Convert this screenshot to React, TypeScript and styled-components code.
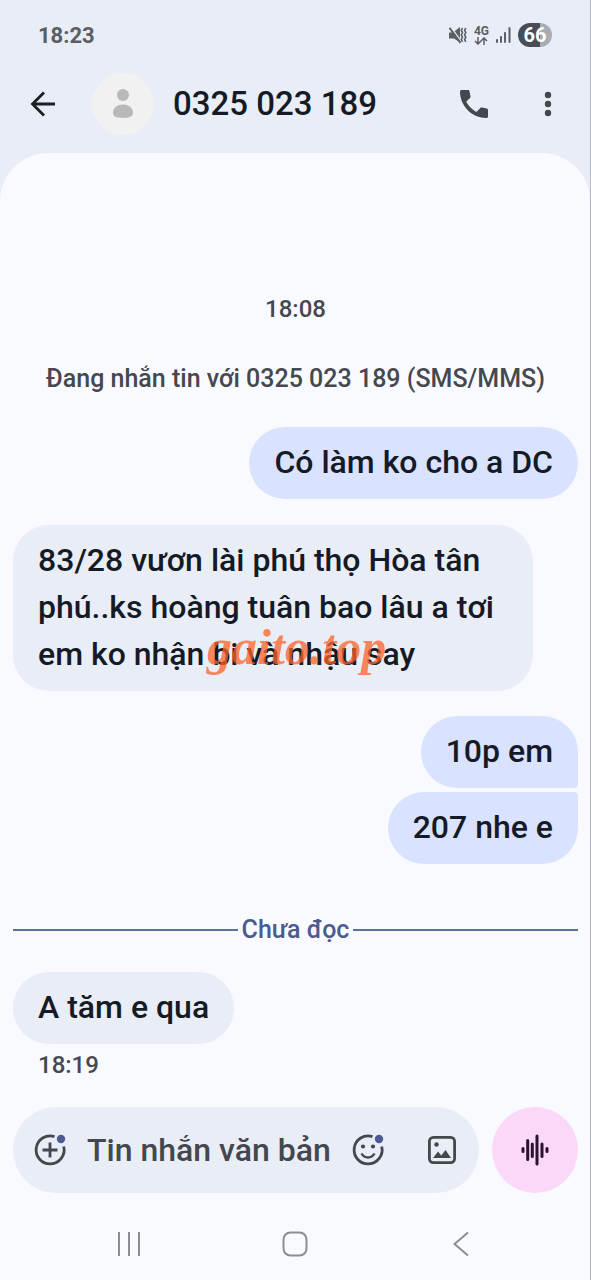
import React from "react";
import styled, { createGlobalStyle } from "styled-components";

const GlobalStyle = createGlobalStyle`
  *, *::before, *::after { box-sizing: border-box; }
  body {
    margin: 0;
    background: #e9edf6;
    font-family: Roboto, "Noto Sans", sans-serif;
    font-weight: 500;
    color: #151b26;
  }
  button, input { font: inherit; }
`;

const Screen = styled.div`
  display: flex;
  flex-direction: column;
  min-height: 100vh;
  border-right: 1px solid #b4b7c0;
  background: #e9edf6;
`;

const StatusBar = styled.div`
  display: flex;
  align-items: center;
  justify-content: space-between;
  height: 70px;
  padding: 0 38px;
  color: #5b5e65;
  font-size: 22px;
  font-weight: 700;
`;

const StatusIcons = styled.div`
  display: flex;
  align-items: center;
  gap: 7px;
`;

const Network = styled.span`
  display: flex;
  flex-direction: column;
  align-items: center;
  font-size: 12px;
  line-height: 11px;
`;

const Battery = styled.span`
  width: 34px;
  border-radius: 12px;
  background: linear-gradient(90deg, #4a4d53 66%, #a9acb2 66%);
  color: #ffffff;
  font-size: 20px;
  line-height: 24px;
  text-align: center;
`;

const Header = styled.header`
  display: flex;
  align-items: center;
  height: 83px;
  padding: 0 23px 16px 24px;
`;

const IconButton = styled.button`
  display: flex;
  flex: none;
  align-items: center;
  justify-content: center;
  width: 38px;
  height: 44px;
  padding: 0;
  border: 0;
  background: none;
  color: #44474e;
`;

const Avatar = styled.span`
  display: flex;
  align-items: center;
  justify-content: center;
  width: 62px;
  height: 62px;
  margin-left: 30px;
  border-radius: 50%;
  background: #f1f1f1;
`;

const Title = styled.h1`
  flex: 1;
  margin: 0 0 0 19px;
  font-size: 33px;
  font-weight: 500;
  line-height: 44px;
  white-space: nowrap;
`;

const HeaderActions = styled.div`
  display: flex;
  gap: 36px;
`;

const Sheet = styled.main`
  display: flex;
  flex: 1;
  flex-direction: column;
  border-radius: 48px 48px 0 0;
  background: #f8faff;
`;

const Conversation = styled.section`
  display: flex;
  flex: 1;
  flex-direction: column;
  justify-content: flex-end;
  padding: 120px 12px 27px 13px;
`;

const Time = styled.time`
  color: #45484f;
  font-size: 24px;
  line-height: 30px;
  text-align: center;
`;

const SentTime = styled(Time)`
  margin: 6px 25px 0;
  text-align: left;
`;

const Notice = styled.p`
  margin: 40px 0 33px;
  color: #45484f;
  font-size: 25px;
  line-height: 30px;
  text-align: center;
`;

const Bubble = styled.div<{ $sent?: boolean; $join?: "above" | "below" }>`
  position: relative;
  align-self: ${(p) => (p.$sent ? "flex-end" : "flex-start")};
  max-width: 520px;
  padding: 12px 25px 13px;
  border-radius: 36px;
  border-bottom-right-radius: ${(p) => (p.$join === "below" ? 4 : 36)}px;
  border-top-right-radius: ${(p) => (p.$join === "above" ? 4 : 36)}px;
  background: ${(p) => (p.$sent ? "#d9e2ff" : "#e9edf6")};
  font-size: 32px;
  line-height: 47px;
`;

const Group = styled.div<{ $top: number }>`
  display: flex;
  flex-direction: column;
  gap: 4px;
  margin-top: ${(p) => p.$top}px;
`;

const Watermark = styled.span`
  position: absolute;
  left: 194px;
  bottom: 16px;
  color: rgba(255, 98, 40, 0.75);
  font-family: "Liberation Serif", serif;
  font-size: 50px;
  font-style: italic;
  font-weight: 700;
  line-height: 56px;
`;

const Unread = styled.div`
  display: flex;
  align-items: center;
  gap: 4px;
  margin-top: 50px;
  color: #4c5b8c;
  font-size: 25px;
  line-height: 32px;

  &::before, &::after {
    content: "";
    flex: 1;
    height: 2px;
    background: #5b7491;
  }
`;

const Composer = styled.form`
  display: flex;
  gap: 13px;
  padding: 0 12px 0 13px;
`;

const Field = styled.div`
  display: flex;
  flex: 1;
  align-items: center;
  min-width: 0;
  height: 86px;
  padding: 0 18px;
  border-radius: 43px;
  background: #e9edf6;
`;

const TextInput = styled.input`
  flex: 1;
  min-width: 0;
  margin: 0 0 0 18px;
  padding: 0;
  border: 0;
  outline: 0;
  background: none;
  color: #151b26;
  font-size: 32px;
  line-height: 48px;

  &::placeholder { color: #44474e; opacity: 1; }
`;

const FieldActions = styled.div`
  display: flex;
  gap: 36px;
`;

const VoiceButton = styled.button`
  display: flex;
  flex: none;
  align-items: center;
  justify-content: center;
  width: 86px;
  height: 86px;
  padding: 0;
  border: 0;
  border-radius: 50%;
  background: #fbd7f8;
  color: #2c1231;
`;

const NavBar = styled.nav`
  display: flex;
  align-items: center;
  justify-content: space-between;
  height: 87px;
  padding: 15px 110px 0 110px;
`;

export default function App() {
  return (
    <>
      <GlobalStyle />
      <Screen>
        <StatusBar>
          <span>18:23</span>
          <StatusIcons>
            <svg width="18" height="18" viewBox="0 0 18 18" fill="none" stroke="#5b5e65" strokeWidth="1.6">
              <path d="M0 6.500h4L11 1v15.500L5 12.500H0z" fill="#5b5e65" stroke="none" />
              <path d="M1.500 1L12.500 15.500" stroke="#e9edf6" strokeWidth="1.4" />
              <path d="M0.500 1.800L11.500 16.800" stroke="#5b5e65" strokeWidth="2" />
              <path d="M13.500 2l-1.200 2.300 1.200 2.300-1.200 2.300 1.200 2.300-1.200 2.300 1.200 2.300M16.800 2l-1.200 2.300 1.200 2.300-1.200 2.300 1.200 2.300-1.200 2.300 1.200 2.300" />
            </svg>
            <Network>
              4G
              <svg width="14" height="8" viewBox="0 0 14 8" fill="none" stroke="#5b5e65" strokeWidth="1.5">
                <path d="M4 0v7M1 4l3 3 3-3M10 8V1M7 4l3-3 3 3" />
              </svg>
            </Network>
            <svg width="15" height="16" viewBox="0 0 15 16" fill="#5b5e65">
              <rect x="0" y="12" width="2" height="4" rx="1" />
              <rect x="4" y="9" width="2" height="7" rx="1" />
              <rect x="8" y="5" width="2" height="11" rx="1" />
              <rect x="12.500" y="0" width="2" height="16" rx="1" />
            </svg>
            <Battery>66</Battery>
          </StatusIcons>
        </StatusBar>

        <Header>
          <IconButton type="button" aria-label="Quay lại">
            <svg width="26" height="26" viewBox="0 0 26 26" fill="none" stroke="#1b1e24" strokeWidth="2.800">
              <path d="M25 13H2.500M14 1.500L2.500 13 14 24.500" />
            </svg>
          </IconButton>
          <Avatar>
            <svg width="20" height="30" viewBox="0 0 20 30" fill="#b9b9b9">
              <circle cx="10" cy="6" r="6" />
              <path d="M0 24c0-5 4-8.500 10-8.500S20 19 20 24c0 2.500-1.500 3.500-3 4-3.500 1.200-10.500 1.200-14 0-1.500-.5-3-1.500-3-4z" />
            </svg>
          </Avatar>
          <Title>0325 023 189</Title>
          <HeaderActions>
            <IconButton type="button" aria-label="Gọi">
              <svg width="28" height="28" viewBox="0 0 28 28" fill="currentColor">
                <path d="M1.500 0h6.500c.8 0 1.300.5 1.500 1.200l1 5.300c.1.600 0 1.100-.5 1.600L6.200 11.700c2.200 4 6 7.800 10.200 10.200l3.900-3.900c.5-.5 1-.6 1.600-.5l4.900 1c.8.200 1.200.7 1.200 1.500V26.500c0 .9-.6 1.500-1.500 1.500C12 28 0 16 0 1.500 0 .6.600 0 1.500 0z" />
              </svg>
            </IconButton>
            <IconButton type="button" aria-label="Tùy chọn khác">
              <svg width="8" height="26" viewBox="0 0 8 26" fill="currentColor">
                <circle cx="4" cy="4" r="3.200" />
                <circle cx="4" cy="13" r="3.200" />
                <circle cx="4" cy="22" r="3.200" />
              </svg>
            </IconButton>
          </HeaderActions>
        </Header>

        <Sheet>
          <Conversation>
            <Time>18:08</Time>
            <Notice>Đang nhắn tin với 0325 023 189 (SMS/MMS)</Notice>
            <Bubble $sent>Có làm ko cho a DC</Bubble>
            <Group $top={26}>
              <Bubble>
                83/28 vươn lài phú thọ Hòa tân phú..ks hoàng tuân bao lâu a tơi em ko nhận bi và nhậu say
                <Watermark>gaito.top</Watermark>
              </Bubble>
            </Group>
            <Group $top={25}>
              <Bubble $sent $join="below">10p em</Bubble>
              <Bubble $sent $join="above">207 nhe e</Bubble>
            </Group>
            <Unread>Chưa đọc</Unread>
            <Group $top={26}>
              <Bubble>A tăm e qua</Bubble>
            </Group>
            <SentTime>18:19</SentTime>
          </Conversation>

          <Composer>
            <Field>
              <IconButton type="button" aria-label="Thêm">
                <svg width="34" height="34" viewBox="0 0 34 34" fill="none" stroke="currentColor" strokeWidth="2.800">
                  <path d="M21.500 3.600A14 14 0 1 0 30.700 13.500" />
                  <path d="M17 9.500v15M9.500 17h15" />
                  <circle cx="28" cy="6" r="4.200" fill="#4c5b92" stroke="none" />
                </svg>
              </IconButton>
              <TextInput type="text" aria-label="Tin nhắn văn bản" placeholder="Tin nhắn văn bản" />
              <FieldActions>
                <IconButton type="button" aria-label="Biểu tượng cảm xúc">
                  <svg width="34" height="34" viewBox="0 0 34 34" fill="none" stroke="currentColor" strokeWidth="2.800">
                    <path d="M21.500 3.600A14 14 0 1 0 30.700 13.500" />
                    <path d="M10.500 20.500c1.500 2.600 3.800 4 6.500 4s5-1.400 6.500-4" strokeWidth="2.400" />
                    <circle cx="12" cy="13.500" r="2.100" fill="currentColor" stroke="none" />
                    <circle cx="22" cy="13.500" r="2.100" fill="currentColor" stroke="none" />
                    <circle cx="28" cy="6" r="4.200" fill="#4c5b92" stroke="none" />
                  </svg>
                </IconButton>
                <IconButton type="button" aria-label="Thư viện ảnh">
                  <svg width="28" height="28" viewBox="0 0 28 28" fill="none" stroke="currentColor" strokeWidth="2.800">
                    <rect x="1.400" y="1.400" width="25.200" height="25.200" rx="4" />
                    <circle cx="8.500" cy="8.500" r="2.200" fill="currentColor" stroke="none" />
                    <path d="M5 22l5-6.500 3.300 4 4.200-5.500L23 22z" fill="currentColor" stroke="none" />
                  </svg>
                </IconButton>
              </FieldActions>
            </Field>
            <VoiceButton type="button" aria-label="Ghi âm">
              <svg width="28" height="32" viewBox="0 0 28 32" fill="none" stroke="currentColor" strokeWidth="3" strokeLinecap="round">
                <path d="M2 14.500v3M6.700 6.500v19M11.300 10v12.500M16 2v28M21 10v12.500M26 14.500v3" />
              </svg>
            </VoiceButton>
          </Composer>

          <NavBar>
            <IconButton type="button" aria-label="Ứng dụng gần đây">
              <svg width="24" height="24" viewBox="0 0 24 24" fill="none" stroke="#8c8d91" strokeWidth="2">
                <path d="M2 0v24M12 0v24M22 0v24" />
              </svg>
            </IconButton>
            <IconButton type="button" aria-label="Màn hình chính">
              <svg width="26" height="26" viewBox="0 0 26 26" fill="none" stroke="#8c8d91" strokeWidth="2">
                <rect x="1.500" y="1.500" width="23" height="23" rx="7" />
              </svg>
            </IconButton>
            <IconButton type="button" aria-label="Trở lại">
              <svg width="16" height="24" viewBox="0 0 16 24" fill="none" stroke="#8c8d91" strokeWidth="2">
                <path d="M15 .5L1.500 12 15 23.500" />
              </svg>
            </IconButton>
          </NavBar>
        </Sheet>
      </Screen>
    </>
  );
}
